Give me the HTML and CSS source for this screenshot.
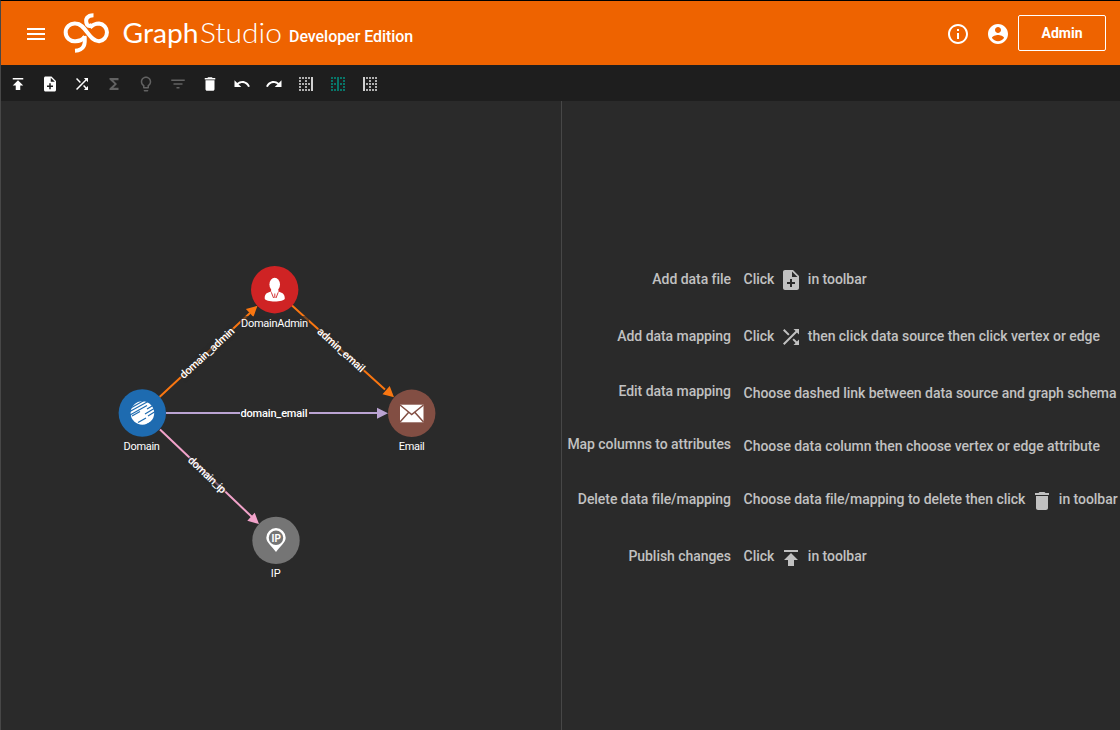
FILE: index.html
```html
<!DOCTYPE html>
<html lang="en">
<head>
<meta charset="utf-8">
<title>GraphStudio</title>
<link rel="stylesheet" href="styles.css">
</head>
<body>
<svg class="defs" width="0" height="0">
  <symbol id="i-publish" viewBox="0 0 24 24"><path d="M5 4v2h14V4H5zm0 10h4v6h6v-6h4l-7-7-7 7z"/></symbol>
  <symbol id="i-add-file" viewBox="0 0 24 24"><path d="M14 2H6c-1.1 0-2 .9-2 2v16c0 1.1.9 2 2 2h12c1.100 0 2-.9 2-2V8l-6-6zm2 14h-3v3h-2v-3H8v-2h3v-3h2v3h3v2zm-3-7V3.500L18.500 9H13z"/></symbol>
  <symbol id="i-shuffle" viewBox="0 0 24 24"><path d="M10.590 9.170L5.410 4 4 5.410l5.170 5.170 1.420-1.410zM14.500 4l2.040 2.040L4 18.590 5.410 20 17.960 7.460 20 9.500V4h-5.500zm.33 9.410l-1.410 1.410 3.130 3.130L14.500 20H20v-5.500l-2.040 2.040-3.130-3.130z"/></symbol>
  <symbol id="i-sum" viewBox="0 0 24 24"><path d="M18 4H6v2l6.500 6L6 18v2h12v-3h-7l5-5-5-5h7z"/></symbol>
  <symbol id="i-bulb" viewBox="0 0 24 24"><path d="M9 21c0 .55.45 1 1 1h4c.55 0 1-.45 1-1v-1H9v1zm3-19C8.140 2 5 5.140 5 9c0 2.380 1.190 4.470 3 5.740V17c0 .55.45 1 1 1h6c.55 0 1-.45 1-1v-2.260c1.810-1.270 3-3.360 3-5.740 0-3.860-3.140-7-7-7zm2.850 11.100l-.85.6V16h-4v-2.300l-.85-.6A4.997 4.997 0 0 1 7 9c0-2.760 2.240-5 5-5s5 2.240 5 5c0 1.630-.8 3.160-2.150 4.100z"/></symbol>
  <symbol id="i-filter" viewBox="0 0 24 24"><path d="M10 18h4v-2h-4v2zM3 6v2h18V6H3zm3 7h12v-2H6v2z"/></symbol>
  <symbol id="i-trash" viewBox="0 0 24 24"><path d="M6 19c0 1.100.9 2 2 2h8c1.100 0 2-.9 2-2V7H6v12zM19 4h-3.500l-1-1h-5l-1 1H5v2h14V4z"/></symbol>
  <symbol id="i-undo" viewBox="0 0 24 24"><path d="M12.500 8c-2.650 0-5.050.99-6.900 2.600L2 7v9h9l-3.620-3.620c1.390-1.160 3.160-1.880 5.120-1.880 3.540 0 6.550 2.310 7.600 5.500l2.370-.78C21.080 11.030 17.150 8 12.500 8z"/></symbol>
  <symbol id="i-redo" viewBox="0 0 24 24"><path d="M18.400 10.600C16.550 8.990 14.150 8 11.500 8c-4.650 0-8.580 3.030-9.960 7.220L3.900 16c1.050-3.190 4.050-5.500 7.600-5.500 1.950 0 3.730.72 5.120 1.880L13 16h9V7l-3.600 3.600z"/></symbol>
  <symbol id="i-right" viewBox="0 0 14 14"><path d="M12 0h2v14h-2z"/><path class="dots" d="M0 1h11M0 4h2M6 4h2M0 7h11M0 10h2M6 10h2M0 13h11"/></symbol>
  <symbol id="i-mid" viewBox="0 0 14 14"><path d="M6 0h2v14H6z"/><path class="dots" d="M0 1h5M9 1h5M0 4h2M12 4h2M0 7h5M9 7h5M0 10h2M12 10h2M0 13h5M9 13h5"/></symbol>
  <symbol id="i-left" viewBox="0 0 14 14"><path d="M0 0h2v14H0z"/><path class="dots" d="M3 1h11M6 4h2M12 4h2M3 7h11M6 10h2M12 10h2M3 13h11"/></symbol>
  <symbol id="i-info" viewBox="0 0 24 24"><path d="M11 7h2v2h-2zm0 4h2v6h-2zm1-9C6.480 2 2 6.480 2 12s4.480 10 10 10 10-4.480 10-10S17.520 2 12 2zm0 18c-4.410 0-8-3.590-8-8s3.590-8 8-8 8 3.590 8 8-3.590 8-8 8z"/></symbol>
  <symbol id="i-user" viewBox="0 0 24 24"><path d="M12 2C6.480 2 2 6.480 2 12s4.480 10 10 10 10-4.480 10-10S17.520 2 12 2zm0 3c1.660 0 3 1.340 3 3s-1.340 3-3 3-3-1.340-3-3 1.340-3 3-3zm0 14.200c-2.500 0-4.710-1.280-6-3.220.03-1.990 4-3.080 6-3.080 1.990 0 5.970 1.090 6 3.080-1.290 1.940-3.500 3.220-6 3.220z"/></symbol>
</svg>
<div class="app">
  <header class="header">
    <svg class="menu" viewBox="0 0 24 24"><path d="M3 18h18v-2H3v2zm0-5h18v-2H3v2zm0-7v2h18V6H3z"/></svg>
    <svg class="logo" viewBox="60 10 226 46">
      <g class="logo-mark">
        <path d="M85 36.500C82.500 40 80 41.200 75.500 41.200A8.900 8.900 0 1 1 75.500 23.500C86 23.500 88.500 41.200 99 41.200A8.900 8.900 0 0 0 99 23.500C95.500 23.500 92.500 25 90 27.500"/>
        <path d="M84.500 36C85.500 44 84.500 50.300 75 50.800"/>
        <path d="M93.500 15.200C87.500 15.200 84.500 19 87 24.500Q89 27 92 25"/>
      </g>
      <text class="word-bold" x="122.500" y="43" textLength="76" lengthAdjust="spacingAndGlyphs">Graph</text>
      <text class="word-thin" x="200" y="43" textLength="82" lengthAdjust="spacingAndGlyphs">Studio</text>
    </svg>
    <span class="edition">Developer Edition</span>
    <svg class="head-icon info"><use href="#i-info"/></svg>
    <svg class="head-icon"><use href="#i-user"/></svg>
    <button class="admin">Admin</button>
  </header>
  <nav class="toolbar">
    <svg class="tool"><use href="#i-publish"/></svg>
    <svg class="tool"><use href="#i-add-file"/></svg>
    <svg class="tool"><use href="#i-shuffle"/></svg>
    <svg class="tool off"><use href="#i-sum"/></svg>
    <svg class="tool off"><use href="#i-bulb"/></svg>
    <svg class="tool off"><use href="#i-filter"/></svg>
    <svg class="tool"><use href="#i-trash"/></svg>
    <svg class="tool"><use href="#i-undo"/></svg>
    <svg class="tool"><use href="#i-redo"/></svg>
    <svg class="tool layout"><use href="#i-right"/></svg>
    <svg class="tool layout active"><use href="#i-mid"/></svg>
    <svg class="tool layout"><use href="#i-left"/></svg>
  </nav>
  <main class="panes">
    <svg class="graph" viewBox="1 101 560 629">
      <g class="edge orange"><path d="M159.500 397L250 313M292 305.500L385 389.500"/><path class="tip" d="M257.500 305.800L253.400 317 245.900 308.900zM394 397.300L382.500 394.300 389.700 386z"/></g>
      <g class="edge purple"><path d="M166 413H378"/><path class="tip" d="M388 413.300L377 407.800V418.800z"/></g>
      <g class="edge pink"><path d="M160 429.500L252 517"/><path class="tip" d="M259 524L247.300 520.800 254.700 512.800z"/></g>
      <g class="edge-label" transform="translate(207.500 353.500) rotate(-42.500)"><rect x="-36" y="-7" width="72" height="14"/><text y="3" textLength="70">domain_admin</text></g>
      <g class="edge-label" transform="translate(341 350) rotate(42.300)"><rect x="-31" y="-7" width="62" height="14"/><text y="3.500" textLength="60">admin_email</text></g>
      <g class="edge-label solid" transform="translate(274 413)"><rect x="-34" y="-7" width="69" height="14"/><text y="3.500" textLength="67">domain_email</text></g>
      <g class="edge-label" transform="translate(207 475) rotate(43.500)"><rect x="-25" y="-7" width="50" height="14"/><text y="3.500" textLength="48">domain_ip</text></g>
      <rect class="label-back" x="240" y="316" width="69" height="14"/>
      <circle cx="274.700" cy="289.700" r="23.700" fill="#cf2324"/>
      <g class="glyph"><ellipse cx="274.700" cy="284.500" rx="5.300" ry="6.800"/><path d="M271 291.500C267 293 264.700 293.300 264.700 298.500 265 302.500 284.500 302.500 284.800 298.500 284.800 293.300 282 293 278.500 291.500L275 298z"/></g>
      <path class="glyph" d="M271 290H278.500L277.500 297H272z"/>
      <path d="M271.300 292.300L273.600 298M278.200 292.300L276 298M274.800 293.500V297.500" stroke="#cf2324" stroke-width=".9"/>
      <circle cx="142.300" cy="413" r="23.700" fill="#1e6bb0"/>
      <circle class="glyph" cx="142.400" cy="413" r="11.800"/>
      <g class="stripes"><path d="M129 409L144 400.500M129 412L148 401.500M130 415L147 405.500M147 409L153 405.500M132 416L140 411.500M145 414L155 408M148 416L156 411M138 422.500L146 418M146 425L155 420"/></g>
      <circle cx="411.700" cy="413.300" r="23.700" fill="#824e43"/>
      <path class="glyph" d="M400 404.700H423.500V422.300H400z"/>
      <path d="M400 405L411.700 414.500 423.500 405M400 422L408.500 412.500M423.500 422L415 412.500" fill="none" stroke="#824e43" stroke-width="1.500"/>
      <circle cx="276" cy="540.400" r="23.700" fill="#757575"/>
      <path class="glyph" d="M276 552C272 546.500 266.300 542.500 266.300 537.800A9.700 9.700 0 0 1 285.700 537.800C285.700 542.500 280 546.500 276 552z"/>
      <circle cx="276" cy="537.800" r="7.200" fill="#757575"/>
      <text class="ip" x="276.200" y="541.800">IP</text>
      <g class="node-label"><text x="274.500" y="327" textLength="67">DomainAdmin</text><text x="141.700" y="450" textLength="36.500">Domain</text><text x="411.700" y="450" textLength="26">Email</text><text x="275.700" y="577">IP</text></g>
    </svg>
    <section class="help">
      <div class="label">Add data file</div><div class="step"><span>Click</span><svg><use href="#i-add-file"/></svg><span>in toolbar</span></div>
      <div class="label">Add data mapping</div><div class="step"><span>Click</span><svg><use href="#i-shuffle"/></svg><span>then click data source then click vertex or edge</span></div>
      <div class="label raised">Edit data mapping</div><div class="step lowered">Choose dashed link between data source and graph schema</div>
      <div class="label raised">Map columns to attributes</div><div class="step">Choose data column then choose vertex or edge attribute</div>
      <div class="label">Delete data file/mapping</div><div class="step"><span>Choose data file/mapping to delete then click</span><svg><use href="#i-trash"/></svg><span>in toolbar</span></div>
      <div class="label">Publish changes</div><div class="step"><span>Click</span><svg><use href="#i-publish"/></svg><span>in toolbar</span></div>
    </section>
  </main>
</div>
</body>
</html>
```
FILE: styles.css
```css
* { box-sizing: border-box; }
body { margin: 0; background: #2a2a2a; font-family: Roboto, sans-serif; overflow: hidden; }
.defs { display: none; }
.app { width: 1120px; height: 730px; display: flex; flex-direction: column; border-top: 1px solid #000; border-left: 1px solid #474747; }
.header { height: 64px; flex: none; display: flex; align-items: center; background: #ee6300; color: #fff; padding: 0 14px 0 23px; }
.header svg { fill: #fff; flex: none; }
.menu { width: 24px; height: 24px; margin-top: 2px; }
.logo { width: 226px; height: 46px; margin-left: 12px; }
.logo-mark { fill: none; stroke: #fff; stroke-width: 4; }
.word-bold { font: 400 27px Lato, sans-serif; }
.word-thin { font: 300 27px Lato, sans-serif; }
.edition { font-size: 16px; font-weight: 500; letter-spacing: -.05px; margin: 6px auto 0 3px; white-space: nowrap; }
.head-icon { width: 24px; height: 24px; margin: 2px 8px 0 0; }
.head-icon.info { margin-right: 16px; }
.admin { width: 88px; height: 36px; border: 1px solid #fff; border-radius: 2px; background: none; color: #fff; font: 700 14px Roboto, sans-serif; padding: 0; }
.toolbar { height: 36px; flex: none; display: flex; align-items: center; gap: 14px; padding: 1px 0 0 8px; background: #1e1e1e; }
.tool { width: 18px; height: 18px; fill: #fff; flex: none; }
.tool.off { fill: #626262; }
.tool.layout { width: 14px; height: 14px; margin: 0 2px; fill: #d0d0d0; stroke: #b0b0b0; }
.tool.layout.active { fill: #087568; stroke: #087568; }
.dots { stroke-width: 2; stroke-dasharray: 2 1; fill: none; }
#i-right path:first-child, #i-mid path:first-child, #i-left path:first-child { stroke: none; }
.panes { flex: 1; display: grid; grid-template-columns: 560px 1fr; background: #2a2a2a; }
.graph { width: 560px; height: 629px; }
.edge { fill: none; stroke-width: 2; }
.edge .tip { stroke: none; }
.orange { stroke: #f97611; }
.orange .tip { fill: #f97611; }
.purple { stroke: #bba4d3; }
.purple .tip { fill: #bba4d3; }
.pink { stroke: #f2a3ca; }
.pink .tip { fill: #f2a3ca; }
.edge-label text { font-size: 11px; font-weight: 500; fill: #fff; text-anchor: middle; }
.edge-label rect, .label-back { fill: #2a2a2a; opacity: .6; }
.edge-label.solid rect { opacity: 1; }
.glyph { fill: #fff; }
.stripes { fill: none; stroke: #1e6bb0; stroke-width: 1.200; }
.ip { font-size: 10px; font-weight: 700; fill: #fff; text-anchor: middle; }
.node-label text { font-size: 11px; font-weight: 400; fill: #fff; text-anchor: middle; }
.help { border-left: 1px solid #474747; padding-top: 149px; display: grid; grid-template-columns: 169px 1fr; column-gap: 12.600px; grid-template-rows: 57px 57px 56px 51px 56px 58px; align-items: center; align-content: start; color: #c1c1c1; font-size: 14px; font-weight: 500; letter-spacing: -.045px; white-space: nowrap; }
.label { text-align: right; }
.label.raised { padding-bottom: 3px; }
.step { display: flex; align-items: center; }
.step.lowered { padding-top: 2px; }
.step svg { width: 24px; height: 24px; margin: 3px 4.800px 0; fill: #c1c1c1; }
```
